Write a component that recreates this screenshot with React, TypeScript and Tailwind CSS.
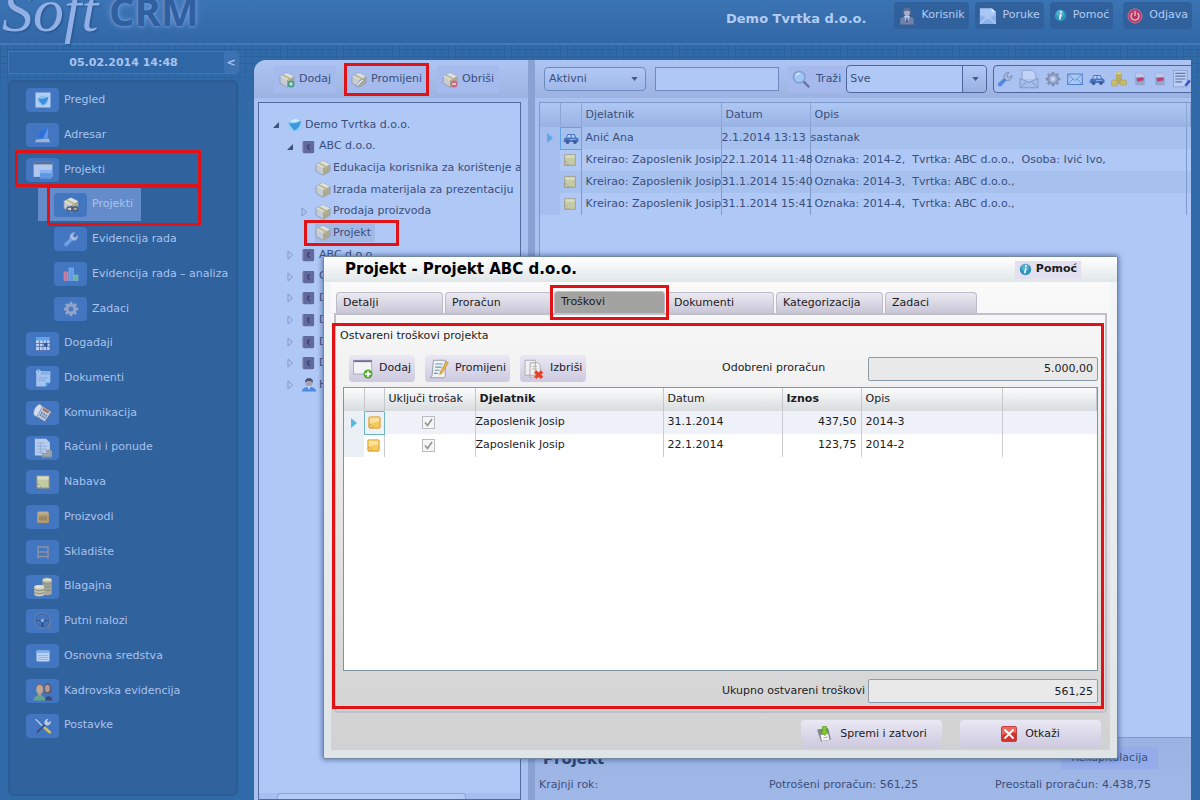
import type { ReactNode } from "react";

/* ---------- icons ---------- */

function Svg({ children, size = 16 }: { children: ReactNode; size?: number }) {
  return (
    <svg width={size} height={size} viewBox="0 0 16 16" aria-hidden="true" className="shrink-0">
      {children}
    </svg>
  );
}

const GEAR =
  "M7 1h2l.4 2 1.2.5L12.300 2.300l1.400 1.400-1.200 1.700.5 1.200 2 .4v2l-2 .4-.5 1.200 1.200 1.700-1.400 1.400-1.700-1.200-1.200.5-.4 2H7l-.4-2-1.200-.5-1.700 1.200-1.400-1.400 1.200-1.700L3 9.400 1 9V7l2-.4.5-1.200-1.200-1.700 1.400-1.400 1.700 1.200L6.600 3z";

function Icon({ name, size = 16 }: { name: string; size?: number }) {
  const art: Record<string, ReactNode> = {
    globe: (
      <>
        <circle cx="8" cy="8" r="6.500" fill="#8fcdf4" />
        <path d="M1.500 5.500c3 1.500 8 1 12.500-1.500-1 5-3 8-6.500 9.500-2-2-4-4.500-6-8z" fill="#3f97dd" />
        <path d="M3 4.500c2-3 7-3.500 9.500-1-3 2-6.500 2.500-9.500 1z" fill="#c9ecfd" />
      </>
    ),
    globePage: (
      <>
        <rect x="0.500" y="0.500" width="15" height="15" fill="#b3cdf3" />
        <circle cx="8" cy="8.500" r="5" fill="#86c3f0" />
        <path d="M2.500 6c3 1.500 7 1 11-1.500-1 5-3 7-5.500 8.500-2-2-4-4-5.500-7z" fill="#3d8fdc" />
      </>
    ),
    adresar: (
      <>
        <path d="M4 5L12.500 1v10H3.500z" fill="#5d95e8" />
        <path d="M4 5L12.500 1 8 10.800l-4.500.2z" fill="#2f6fd8" />
        <path d="M2 12l11-1 1.500 3.500H.8z" fill="#9eb2d8" />
      </>
    ),
    window: (
      <>
        <rect x="0.500" y="1.500" width="15" height="12" fill="#b2c7ee" />
        <rect x="0.500" y="1.500" width="15" height="2" fill="#5b6f98" />
        <rect x="5.500" y="8" width="9.500" height="7" rx="1" fill="#5f97e4" />
        <rect x="5.500" y="8" width="9.500" height="2.500" rx="1" fill="#88b3ef" />
      </>
    ),
    box: <BoxArt />,
    boxLink: (
      <>
        <BoxArt />
        <rect x="4" y="10" width="6" height="4" rx="2" fill="none" stroke="#46577e" strokeWidth="1.300" />
        <rect x="9" y="10" width="6" height="4" rx="2" fill="none" stroke="#46577e" strokeWidth="1.300" />
      </>
    ),
    boxAdd: (
      <>
        <BoxArt />
        <circle cx="12" cy="12" r="3.500" fill="#46998c" />
        <path d="M12 10v4M10 12h4" stroke="#d5efe6" strokeWidth="1.200" />
      </>
    ),
    boxEdit: (
      <>
        <BoxArt />
        <path d="M5 14.500l1-2.500 5-5 1.500 1.500-5 5z" fill="#d9e2f2" stroke="#7f8cab" strokeWidth="0.600" />
      </>
    ),
    boxDel: (
      <>
        <BoxArt />
        <circle cx="12" cy="12" r="3.500" fill="#c56a82" />
        <path d="M10 12h4" stroke="#f0dce8" strokeWidth="1.400" />
      </>
    ),
    wrench: (
      <>
        <path d="M1.500 12.500L7 7l2.500 2.500L4 15c-1.800 1-3.500-.8-2.500-2.500z" fill="#6fa0ea" />
        <path d="M7 7c-.6-3 1.500-5.800 5-5.500L10 4l.5 2 2 .4 2.300-2.200C15.500 8 12.500 10 9.500 9.300z" fill="#a9bfe6" stroke="#7f97c6" strokeWidth="0.600" />
      </>
    ),
    wrenchBlue: (
      <>
        <path d="M1 12.500L7 7l2.500 2.500L4 15.200c-1.800 1-4-.8-3-2.700z" fill="#5288e0" />
        <path d="M7 7c-.6-3 1.500-5.800 5-5.500L10 4l.5 2 2 .4 2.300-2.200C15.500 8 12.500 10 9.500 9.300z" fill="#a9bbdf" stroke="#6f83ae" strokeWidth="0.800" />
      </>
    ),
    chart: (
      <>
        <rect x="1" y="6" width="4" height="8.500" fill="#c0799f" stroke="#d391ad" strokeWidth="0.600" />
        <rect x="6" y="2" width="4.500" height="12.500" fill="#5f9dea" stroke="#86b6f2" strokeWidth="0.600" />
        <rect x="11.500" y="9" width="3.500" height="5.500" fill="#68b0a4" stroke="#8bc7b8" strokeWidth="0.600" />
      </>
    ),
    gear: (
      <>
        <path d={GEAR} fill="#93a4c8" stroke="#93a4c8" strokeWidth="0.400" />
        <circle cx="8" cy="8" r="2.500" fill="#4f78c0" />
      </>
    ),
    gearLight: (
      <>
        <path d={GEAR} fill="#8494b8" stroke="#74849f" strokeWidth="0.400" />
        <circle cx="8" cy="8" r="3.800" fill="#a3b2d4" />
        <circle cx="8" cy="8" r="2" fill="#c5d6f6" />
      </>
    ),
    calendar: (
      <>
        <rect x="1" y="1.500" width="14" height="13" fill="#bccff2" />
        <rect x="1" y="1.500" width="14" height="3" fill="#5da3ea" />
        <path d="M1 7.500h14M1 10.500h14M4.500 4.500v10M8 4.500v10M11.500 4.500v10M1 14.500h14v-13" stroke="#4e6eaa" strokeWidth="0.800" fill="none" />
        <rect x="9" y="7" width="3.500" height="3.500" fill="#33549a" />
      </>
    ),
    docs: (
      <>
        <path d="M2 2h12.500v10l-4 3.500H2z" fill="#a4c3ee" />
        <path d="M2 2h12.500v3H2z" fill="#86b1e9" />
        <circle cx="4" cy="2.500" r="1.700" fill="none" stroke="#cfdff8" strokeWidth="0.800" />
        <path d="M14.500 12h-4v3.500z" fill="#35a1e0" />
        <path d="M4 8h8M4 10h6" stroke="#7d9fd6" strokeWidth="0.800" />
      </>
    ),
    phone: (
      <>
        <path d="M5 .8l10 6.200-5.500 8.200L1 10z" fill="#b8c5de" stroke="#56688f" strokeWidth="0.700" />
        <path d="M5.500.8C2 2 0 6 .6 9.500L3 11 7.500 3z" fill="#d4def0" stroke="#7285ad" strokeWidth="0.600" />
        <path d="M8.500 4l4.500 2.800-1 1.500-4.500-2.800z" fill="#a9705f" />
        <path d="M6.500 7.500l4.500 3M5.500 9.200l4.500 3" stroke="#60739d" strokeWidth="1.200" strokeDasharray="1.300 0.800" />
      </>
    ),
    invoice: (
      <>
        <path d="M1.500.5h9l3 3V14h-12z" fill="#b7cbec" />
        <path d="M3 4h6M3 6.500h8M3 9h8M3 11.500h5M6 4v8" stroke="#8fabd8" strokeWidth="0.700" />
        <path d="M7 12h4v3.500H7zM10.500 9.500H15v6h-4.500z" fill="#8f99a3" />
        <path d="M7 13.500h4M10.500 11.500H15M10.500 13.500H15" stroke="#b5bcc0" strokeWidth="0.600" />
      </>
    ),
    note: (
      <>
        <rect x="2" y="2" width="12" height="12" fill="#c2cba4" stroke="#a5977a" strokeWidth="1" />
        <path d="M2.500 2.500h11v3h-11z" fill="#d6dcc8" />
        <path d="M2.500 9.500l4 4h-4z" fill="#e4e5cf" stroke="#8f8d78" strokeWidth="0.700" />
      </>
    ),
    noteGold: (
      <>
        <rect x="2" y="2" width="12" height="12" rx="1" fill="#f5c95a" stroke="#d99b2e" strokeWidth="1" />
        <path d="M3 3h10v4L3 9z" fill="#fbe19a" />
        <path d="M3 9.500L6.500 13H3z" fill="#fff4cf" stroke="#c98f2c" strokeWidth="0.700" />
      </>
    ),
    crate: (
      <>
        <rect x="2" y="3" width="12" height="11" rx="1.500" fill="#ab9775" />
        <path d="M3.500 2.500h9L14 5.500H2z" fill="#bcae8b" />
        <rect x="3.500" y="7" width="9" height="5" fill="#9c8661" stroke="#c0ae87" strokeWidth="0.500" />
      </>
    ),
    shelf: <path d="M3 2v12.500M13 2v12.500M2.500 3h11M3 8h10M3 12.500h10" stroke="#8d90a0" strokeWidth="1.500" fill="none" />,
    coins: (
      <>
        <path d="M7.500 2.500c0-2.500 7.500-2.500 7.500 0V13c0 2-7.500 2-7.500 0z" fill="#a6a99b" />
        <path d="M1 8c0-2 8-2 8 0v6c0 2-8 2-8 0z" fill="#c4c5b4" />
        <ellipse cx="11.300" cy="2.300" rx="3.600" ry="1.300" fill="#dcdccc" />
        <ellipse cx="5" cy="7.700" rx="3.900" ry="1.300" fill="#e1e1d0" />
        <path d="M1 10c1.500 1.300 6.500 1.300 8 0M1 12.300c1.500 1.300 6.500 1.300 8 0M8 5c1.500 1 5.500 1 7 0M9 7.500c1.500.8 4.500.8 6 0M9 10c1.500.8 4.500.8 6 0" stroke="#7d8277" fill="none" strokeWidth="0.700" />
      </>
    ),
    wheel: (
      <>
        <circle cx="7.500" cy="7.500" r="6" fill="none" stroke="#46659c" strokeWidth="1.500" />
        <circle cx="7.500" cy="7.500" r="6.900" fill="none" stroke="#7f98c8" strokeWidth="0.500" />
        <path d="M2 7h11L8.500 9v4h-2V9z" fill="#31528c" />
        <circle cx="7.500" cy="7.500" r="1.500" fill="#8fb1e8" />
        <path d="M12 13l3-3M13 15l2-1" stroke="#6d7f9f" strokeWidth="1.300" />
      </>
    ),
    list: (
      <>
        <rect x="1.500" y="2.500" width="13" height="11" rx="1" fill="#bcd2f5" />
        <rect x="1.500" y="2.500" width="13" height="2.500" fill="#7db2f0" />
        <path d="M3 7.500h10M3 9.500h10M3 11.500h10" stroke="#8fadde" strokeWidth="0.800" />
      </>
    ),
    people: (
      <>
        <path d="M9 5c0-4.500 5.500-4.500 5.500 0 .8 2.500.3 4-.5 5H9z" fill="#5c5a70" />
        <ellipse cx="11.500" cy="6" rx="2" ry="3" fill="#b0998f" />
        <path d="M9 15.500c0-4 6.500-5 6.500 0z" fill="#3b4a70" />
        <path d="M2.300 6c0-5 6-5 6 0z" fill="#7c6d66" />
        <ellipse cx="5.300" cy="6.800" rx="2.600" ry="3.700" fill="#c2a696" />
        <path d="M4 9h2.600v4H4z" fill="#b79b8c" />
        <path d="M.5 15.500c0-5.500 9.500-5.500 9.500 0z" fill="#63a58d" />
      </>
    ),
    tools: (
      <>
        <path d="M1.500 2L9 9.500" stroke="#b9c8e6" strokeWidth="1.300" />
        <path d="M9.500 9.500l4.500 4" stroke="#c9bd6a" strokeWidth="2.500" strokeLinecap="round" />
        <path d="M2.500 14L10.500 6" stroke="#3b5080" strokeWidth="1.600" />
        <path d="M9.500 6.500C8.500 4 10.500 1 13 1.500L11.500 3.500l1.500 1.300 2-1.500c.5 3-2.500 5-4.500 4z" fill="#b6c9ec" />
      </>
    ),
    company: (
      <>
        <rect x="2" y="1" width="13" height="14" rx="1.500" fill="#62699d" />
        <path d="M2 2.500v11" stroke="#8d93bd" strokeWidth="1.500" />
        <path d="M10 5.500C7 5.700 7 10.500 10 11" stroke="#343c6e" strokeWidth="1.500" fill="none" />
      </>
    ),
    person: (
      <>
        <path d="M.8 14.500c.5-6.500 14-6.500 14.500 0z" fill="#4b8ade" />
        <path d="M6 9h4l-2 4z" fill="#c4dcf8" />
        <circle cx="8" cy="5.500" r="3.700" fill="#aa9fae" />
        <path d="M4 5.500C3.500-.5 12.500-.5 12 5.500 10 3.500 6 3.500 4 5.500z" fill="#4b5578" />
      </>
    ),
    user: (
      <>
        <path d="M2 15.500V11c0-3.500 12-3.500 12 0v4.500z" fill="#7280a4" />
        <circle cx="8" cy="4.200" r="3.500" fill="#5f6d92" />
        <path d="M5.300 4c0 6 5.400 6 5.400 0-2-1-3.400-1-5.400 0z" fill="#a9aec8" />
        <path d="M5.500 8h5L8 15.500z" fill="#c0d2f4" />
        <path d="M7.500 9h1l.5 4-1 2-1-2z" fill="#4b5f90" />
      </>
    ),
    letter: (
      <>
        <path d="M.8 6V1h10.500L15 4.500V15H.8z" fill="#a9c6f5" />
        <path d="M11.300 1v3.500H15z" fill="#dbe8fd" />
        <path d="M.8 6.500L8 11l7-4.500V15H.8z" fill="#8db2e9" />
        <path d="M.8 15L6.500 10M15 15L9.500 10" stroke="#b9d1f7" strokeWidth="0.900" />
      </>
    ),
    info: (
      <>
        <circle cx="8" cy="8" r="7" fill="#2f93bd" />
        <circle cx="7.500" cy="5.500" r="4.500" fill="#62bcd8" fillOpacity="0.700" />
        <path d="M8.300 6.800L7.300 12M8.700 3.300l-.2 1" stroke="#ecf8fd" strokeWidth="2" strokeLinecap="round" />
      </>
    ),
    power: (
      <>
        <circle cx="8" cy="8" r="7" fill="#b23a66" stroke="#cf6f92" strokeWidth="1" />
        <path d="M5.500 5a4 4 0 1 0 5 0M8 3v5" stroke="#f0bdd2" strokeWidth="1.300" fill="none" />
      </>
    ),
    search: (
      <>
        <circle cx="6" cy="6" r="4.800" fill="#a4c6f5" stroke="#7f9ccf" strokeWidth="1.200" />
        <path d="M3.500 4.500a3 3 0 0 1 3-1.500" stroke="#dceafe" strokeWidth="1.200" fill="none" />
        <path d="M9.800 9.800L14.500 14.500" stroke="#66759a" strokeWidth="2" />
      </>
    ),
    mailOpen: (
      <>
        <path d="M2.500 8V1h8l3 3v4" fill="#c0d3f6" stroke="#8b9fc8" strokeWidth="0.700" />
        <path d="M.8 7.500L8 11l7.200-3.500V15H.8z" fill="#a5bfec" stroke="#7f94bf" strokeWidth="0.700" />
        <path d="M.8 15l5.500-5M15.200 15L9.800 10" stroke="#7f94bf" strokeWidth="0.700" />
      </>
    ),
    mail: (
      <>
        <rect x="0.700" y="3" width="14.600" height="10.500" fill="#a9c8f8" stroke="#4f7fc8" strokeWidth="1" />
        <path d="M1 3.500L8 9.500l7-6M1 13l5-5M15 13l-5-5" stroke="#5c89cc" fill="none" strokeWidth="0.800" />
      </>
    ),
    car: (
      <>
        <path d="M1 8.500l2-1 1.500-3.500h7L13.500 7.500l2 1V12H.5z" fill="#4a76c6" />
        <path d="M4 7.500l1-2.500h2.500v2.500zM8.500 5H11l1.200 2.500H8.500z" fill="#b7d0f5" />
        <circle cx="4.500" cy="12" r="2" fill="#405a94" />
        <circle cx="12" cy="12" r="2" fill="#405a94" />
        <path d="M7 9.500h6" stroke="#86a9e5" strokeWidth="1" />
      </>
    ),
    gold: (
      <>
        <path d="M5 2c0-1.800 6-1.800 6 0v11H5z" fill="#b9ac63" />
        <path d="M.5 10c0-1.500 6-1.500 6 0v4c0 1.500-6 1.500-6 0zM9 10c0-1.500 6.500-1.500 6.500 0v3c0 1.500-6.500 1.500-6.500 0z" fill="#c7b96d" stroke="#a39555" strokeWidth="0.500" />
        <ellipse cx="8" cy="2.200" rx="2.900" ry="1" fill="#ddd293" />
      </>
    ),
    pdf: (
      <>
        <path d="M2.500.8h8.500l2.500 2.500V15.200h-11z" fill="#95a5d2" />
        <path d="M3 1.300h7.500l2.500 2.500v2H3z" fill="#bccaf0" />
        <path d="M4 7l7.500-1 1 3.500-7.500 1.500z" fill="#b8446f" />
      </>
    ),
    text: (
      <>
        <rect x="0.500" y="0.500" width="12" height="14.500" fill="#bccff6" stroke="#8a9dc8" strokeWidth="0.700" />
        <path d="M2 3h9M2 5.500h9M2 8h9M2 10.500h6" stroke="#6577a0" strokeWidth="1.100" />
        <path d="M10 13.500l4-5 2 1.500-4 4.500z" fill="#3c55cc" />
      </>
    ),
    winAdd: (
      <>
        <rect x="0.500" y="1" width="14.500" height="11" fill="#f4f4f6" stroke="#9a9aa8" strokeWidth="0.600" />
        <rect x="0.500" y="1" width="14.500" height="1.500" fill="#716f9a" />
        <circle cx="12" cy="12" r="3.600" fill="#4fae2d" />
        <path d="M12 9.800v4.400M9.800 12h4.400" stroke="#fff" strokeWidth="1.500" />
      </>
    ),
    docEdit: (
      <>
        <path d="M3.500 1H13v12.500l-1 1.500H1l1.500-2z" fill="#f0f2f5" stroke="#8f96a0" strokeWidth="0.700" />
        <path d="M5 4h6M5 6.500h5M4.500 9h4M4 11.500h3" stroke="#6b93bb" strokeWidth="0.900" />
        <path d="M8.500 12.500l.8-2.800L13.800 2l1.600 1-4.600 7.800z" fill="#efb84a" stroke="#b27c25" strokeWidth="0.500" />
      </>
    ),
    docDel: (
      <>
        <path d="M.8 1H9v12H.8zM5 3h6l2 2v9.500H4.500z" fill="#f0f0f1" stroke="#a5a5ab" strokeWidth="0.700" />
        <path d="M6.500 6h4M6.500 8h4" stroke="#bbb" strokeWidth="0.800" />
        <path d="M9 10l5.500 5M14.500 10L9 15" stroke="#e0442a" strokeWidth="2.600" />
      </>
    ),
    save: (
      <>
        <path d="M1 3.500l11-1.500 3 11.500-10 2z" fill="#83888d" />
        <path d="M4.500 9l7.500-1.500 1.500 6-7.500 1.500z" fill="#f3f4f4" />
        <path d="M7.500 12l4-1" stroke="#a7adb2" />
        <path d="M6.500.5h4V5h2.500L8.800 9.500 4 5h2.500z" fill="#7fca28" stroke="#4f8f18" strokeWidth="0.600" />
      </>
    ),
    cancel: (
      <>
        <rect x="0.500" y="0.500" width="15" height="15" rx="1.500" fill="#d6322d" stroke="#b52420" strokeWidth="0.700" />
        <path d="M1 1h14v6c-5-1-9 0-14 2z" fill="#ea6a62" />
        <path d="M4 4l8 8M12 4l-8 8" stroke="#fff" strokeWidth="1.800" strokeLinecap="round" />
      </>
    ),
  };
  return <Svg size={size}>{art[name]}</Svg>;
}

function BoxArt() {
  return (
    <>
      <path d="M8 .8l7 3.500v7L8 15.200l-7-4v-7z" fill="#c6ccd2" stroke="#8b95a8" strokeWidth="0.800" />
      <path d="M8 8l7-3.700v7L8 15.200z" fill="#aaa792" />
      <path d="M1 4.300L8 .8l7 3.500L8 8z" fill="#dadfe0" />
      <path d="M4.500 2.600L11.500 6v3l-2 1V7L2.800 3.500z" fill="#bfb687" />
    </>
  );
}

/* Red highlight frame drawn over the element it sits in. */
function Frame({ className }: { className: string }) {
  return <span className={"pointer-events-none absolute z-20 border-[3px] border-[#e01216] " + className} />;
}

/* ---------- sidebar ---------- */

type NavItem = { label: string; icon: string; size?: number; sub?: boolean; active?: boolean; frame?: string };

const NAV: NavItem[] = [
  { label: "Pregled", icon: "globePage" },
  { label: "Adresar", icon: "adresar", size: 18 },
  { label: "Projekti", icon: "window", size: 20, frame: "-top-0.5 left-[5px] right-[35px] h-[37px]" },
  { label: "Projekti", icon: "boxLink", sub: true, active: true, frame: "-top-0.5 left-[37px] right-[35px] h-[41px]" },
  { label: "Evidencija rada", icon: "wrench", sub: true },
  { label: "Evidencija rada – analiza", icon: "chart", sub: true },
  { label: "Zadaci", icon: "gear", sub: true },
  { label: "Događaji", icon: "calendar" },
  { label: "Dokumenti", icon: "docs", size: 18 },
  { label: "Komunikacija", icon: "phone", size: 20 },
  { label: "Računi i ponude", icon: "invoice", size: 20 },
  { label: "Nabava", icon: "note" },
  { label: "Proizvodi", icon: "crate" },
  { label: "Skladište", icon: "shelf" },
  { label: "Blagajna", icon: "coins", size: 20 },
  { label: "Putni nalozi", icon: "wheel", size: 18 },
  { label: "Osnovna sredstva", icon: "list" },
  { label: "Kadrovska evidencija", icon: "people", size: 20 },
  { label: "Postavke", icon: "tools", size: 18 },
];

function Sidebar() {
  return (
    <aside className="mt-1.5 mb-1 ml-2 flex w-[231px] shrink-0 flex-col text-[#a9c3ee]">
      <div className="flex h-[23px] items-stretch rounded-r border border-[#4377b4] bg-[#2f67a6]">
        <div className="flex-1 pl-3.5 text-center font-bold leading-[22px]">05.02.2014 14:48</div>
        <button type="button" className="w-3.5 bg-[#3c72b2] font-bold leading-none">
          &lt;
        </button>
      </div>
      <nav className="mt-1.5 mr-px flex-1 rounded-md border-2 border-[#2d5c94] bg-[#30629d]">
        <ul className="mt-px grid h-[660px] auto-rows-fr">
          {NAV.map((n, i) => (
            <li key={i} className="relative flex items-center">
              {n.frame && <Frame className={n.frame} />}
              <a
                href="#"
                className={
                  "flex h-[33px] items-center " +
                  (n.active ? "ml-7 bg-[#658cca] pr-2 pl-4" : n.sub ? "pl-11" : "pl-4")
                }
              >
                <span className="mr-[5px] flex h-6 w-[33px] items-center justify-center rounded bg-[#4376c1]">
                  <Icon name={n.icon} size={n.size ?? 16} />
                </span>
                {n.label}
              </a>
            </li>
          ))}
        </ul>
      </nav>
    </aside>
  );
}

/* ---------- project tree ---------- */

type TreeRow = { label: string; icon: string; level: 0 | 1 | 2; exp?: "open" | "closed"; selected?: boolean };

const TREE: TreeRow[] = [
  { label: "Demo Tvrtka d.o.o.", icon: "globe", level: 0, exp: "open" },
  { label: "ABC d.o.o.", icon: "company", level: 1, exp: "open" },
  { label: "Edukacija korisnika za korištenje a", icon: "box", level: 2 },
  { label: "Izrada materijala za prezentaciju", icon: "box", level: 2 },
  { label: "Prodaja proizvoda", icon: "box", level: 2, exp: "closed" },
  { label: "Projekt", icon: "box", level: 2, selected: true },
  { label: "ABC d.o.o.", icon: "company", level: 1, exp: "closed" },
  { label: "C", icon: "company", level: 1, exp: "closed" },
  { label: "D", icon: "company", level: 1, exp: "closed" },
  { label: "D", icon: "company", level: 1, exp: "closed" },
  { label: "D", icon: "company", level: 1, exp: "closed" },
  { label: "D", icon: "company", level: 1, exp: "closed" },
  { label: "H", icon: "person", level: 1, exp: "closed" },
];

const INDENT = ["pl-[11px]", "pl-[25px]", "pl-[39px]"];

function LeftPane() {
  const tool = "flex h-[27px] items-center gap-1 bg-[#a5baed] px-[5px]";
  return (
    <section className="flex w-[274px] shrink-0 flex-col">
      <div className="flex h-[38px] items-center gap-2.5 rounded-tl-xl bg-linear-to-b from-[#aec5f3] to-[#9cb3e2] pt-px pl-5">
        <button type="button" className={tool}>
          <Icon name="boxAdd" />
          Dodaj
        </button>
        <button type="button" className={tool + " relative"}>
          <Icon name="boxEdit" />
          Promijeni
          <Frame className="-inset-x-[2px] -inset-y-[3px]" />
        </button>
        <button type="button" className={tool}>
          <Icon name="boxDel" />
          Obriši
        </button>
      </div>
      <div className="mt-1 mr-[7px] ml-1 flex flex-1 flex-col overflow-hidden border border-[#526a9c] bg-[#b0c8f5]">
        <ul className="mt-[11px] grid h-[282px] auto-rows-fr">
          {TREE.map((r, i) => (
            <li key={i} className={"relative flex items-center whitespace-nowrap " + INDENT[r.level]}>
              <svg width="12" height="12" viewBox="0 0 12 12" aria-hidden="true" className="mr-[5px] shrink-0">
                {r.exp === "open" && <path d="M9 3v6H3z" fill="#3e5178" />}
                {r.exp === "closed" && <path d="M4 2l4.500 4L4 10z" fill="none" stroke="#8299c8" />}
              </svg>
              <span className={"flex h-[18px] items-center gap-0.5 " + (r.selected ? "bg-[#a2b9e6] pr-1" : "")}>
                <Icon name={r.icon} size={r.icon === "company" ? 14 : 16} />
                <span className={r.icon === "company" ? "pl-0.5" : ""}>{r.label}</span>
              </span>
              {r.selected && <Frame className="-top-0.5 left-[45px] h-[26px] w-[95px]" />}
            </li>
          ))}
        </ul>
        <div className="mt-auto h-1.5 bg-[#a6bfee] px-[18px]">
          <div className="mr-9 h-1.5 rounded-t border border-b-0 border-[#8ba5d8] bg-[#b4cbf7]" />
        </div>
      </div>
    </section>
  );
}

/* ---------- activity pane ---------- */

const ACTIVITY = [
  { icon: "car", who: "Anić Ana", date: "2.1.2014 13:13", text: "sastanak", flush: true },
  { icon: "note", who: "Kreirao: Zaposlenik Josip", date: "22.1.2014 11:48", text: "Oznaka: 2014-2,  Tvrtka: ABC d.o.o.,  Osoba: Ivić Ivo," },
  { icon: "note", who: "Kreirao: Zaposlenik Josip", date: "31.1.2014 15:40", text: "Oznaka: 2014-3,  Tvrtka: ABC d.o.o.," },
  { icon: "note", who: "Kreirao: Zaposlenik Josip", date: "31.1.2014 15:41", text: "Oznaka: 2014-4,  Tvrtka: ABC d.o.o.," },
];

const TOOLBAR = [
  { icon: "wrenchBlue", label: "Rad" },
  { icon: "mailOpen", label: "Pismo" },
  { icon: "gearLight", label: "Zadatak" },
  { icon: "mail", label: "E-mail" },
  { icon: "car", label: "Putovanje" },
  { icon: "gold", label: "Trošak" },
  { icon: "pdf", label: "PDF" },
  { icon: "pdf", label: "PDF izvoz" },
  { icon: "text", label: "Bilješka" },
];

const TOOLBAR_SIZE: Record<string, number> = { mailOpen: 20, pdf: 14, text: 18 };

function Caret({ className }: { className: string }) {
  return (
    <svg width="7" height="4" viewBox="0 0 8 5" aria-hidden="true" className={"pointer-events-none absolute " + className}>
      <path d="M0 0h8L4 5z" fill="#465a88" />
    </svg>
  );
}

function RightPane() {
  return (
    <section className="flex min-w-0 flex-1 flex-col overflow-hidden">
      <div className="flex h-[38px] shrink-0 items-center overflow-hidden bg-linear-to-b from-[#aec5f3] to-[#9cb3e2] pl-[9px]">
        <div className="relative w-[102px] shrink-0">
          <select
            aria-label="Status"
            className="block h-6 w-full appearance-none rounded border border-[#6d8ac0] bg-linear-to-b from-[#b2c9f6] to-[#9fb8e7] pl-1"
          >
            <option>Aktivni</option>
          </select>
          <Caret className="top-2.5 right-2" />
        </div>
        <input aria-label="Traženi pojam" className="ml-[9px] h-6 w-[124px] shrink-0 border border-[#6d8ac0] bg-[#b0c8f5] px-1" />
        <button type="button" className="ml-[9px] flex h-[27px] shrink-0 items-center gap-[5px] bg-[#a5b9ed] px-1">
          <Icon name="search" size={19} />
          Traži
        </button>
        <div className="relative ml-px w-[141px] shrink-0">
          <select
            aria-label="Vrsta"
            className="block h-7 w-full appearance-none rounded border border-[#4d659a] bg-[#b0c8f5] pl-[3px]"
          >
            <option>Sve</option>
          </select>
          <span className="pointer-events-none absolute inset-y-px right-px w-6 rounded-r border-l border-[#4d659a] bg-linear-to-b from-[#b0c8f5] to-[#98b1e1]" />
          <Caret className="top-3 right-2" />
        </div>
        <div className="ml-1.5 flex h-7 w-[220px] shrink-0 items-center gap-1.5 rounded border border-[#4d659a] bg-[#aac2f1] pl-[3px]">
          {TOOLBAR.map((t) => (
            <button key={t.label} type="button" aria-label={t.label} className="shrink-0">
              <Icon name={t.icon} size={TOOLBAR_SIZE[t.icon] ?? 16} />
            </button>
          ))}
        </div>
      </div>

      <div className="mt-1 ml-1 flex-1 overflow-hidden border-t border-l border-[#7d98cc] bg-[#b0c8f5]">
        <table className="w-full table-fixed border-collapse text-left whitespace-pre">
          <colgroup>
            <col className="w-5" />
            <col className="w-[21px]" />
            <col className="w-[140px]" />
            <col className="w-[89px]" />
            <col />
            <col className="w-1" />
          </colgroup>
          <thead>
            <tr className="h-6 bg-linear-to-b from-[#afc7f4] to-[#98b3e3] [&>th]:border-r [&>th]:border-[#8ba5d6] [&>th]:font-normal">
              <th />
              <th />
              <th className="pl-1">Djelatnik</th>
              <th className="pl-1">Datum</th>
              <th className="pl-1">Opis</th>
              <th />
            </tr>
          </thead>
          <tbody>
            {ACTIVITY.map((a, i) => (
              <tr key={i} className="h-[22px] odd:bg-[#a7c1ef] [&>td]:p-0">
                <td className="bg-[#a5beed]">
                  {i === 0 && (
                    <svg width="6" height="10" viewBox="0 0 6 10" className="mx-auto block" aria-hidden="true">
                      <path d="M0 0l6 5-6 5z" fill="#5fa6ea" />
                    </svg>
                  )}
                </td>
                <td className={i === 0 ? "border border-[#62a4e8]" : "border-r border-[#7f9bcd]"}>
                  <span className="flex justify-center">
                    <Icon name={a.icon} size={a.flush ? 16 : 14} />
                  </span>
                </td>
                <td className="border-r border-[#7f9bcd]">
                  <span className="pl-1">{a.who}</span>
                </td>
                <td className="border-r border-[#7f9bcd]">{a.date}</td>
                <td className="border-r border-[#7f9bcd]">
                  <span className={a.flush ? "" : "pl-1"}>{a.text}</span>
                </td>
                <td />
              </tr>
            ))}
          </tbody>
        </table>
      </div>

      <div className="flex h-[63px] shrink-0 flex-col border-t border-[#7d98cc] bg-linear-to-b from-[#9ab3e3] to-[#a0b8e7] pl-1">
        <div className="mt-[9px] flex h-[22px] items-center justify-between pr-[33px] pl-1">
          <h2 className="pt-0.5 text-[15px] font-bold text-[#2c4275]">Projekt</h2>
          <button type="button" className="h-[22px] bg-[#94adea] px-2.5">
            Rekapitulacija
          </button>
        </div>
        <div className="mt-2 flex pr-10">
          <span className="w-[230px]">Krajnji rok:</span>
          <span>Potrošeni proračun: 561,25</span>
          <span className="ml-auto">Preostali proračun: 4.438,75</span>
        </div>
      </div>
    </section>
  );
}

/* ---------- dialog ---------- */

const TABS = [
  { label: "Detalji", width: "w-[107px]" },
  { label: "Proračun", width: "w-[107px]" },
  { label: "Troškovi", width: "w-[111px]", active: true },
  { label: "Dokumenti", width: "w-[107px]" },
  { label: "Kategorizacija", width: "w-[107px]" },
  { label: "Zadaci", width: "w-[92px]" },
];

const COSTS = [
  { who: "Zaposlenik Josip", date: "31.1.2014", amount: "437,50", text: "2014-3" },
  { who: "Zaposlenik Josip", date: "22.1.2014", amount: "123,75", text: "2014-2" },
];

function Dialog() {
  const btn = "flex items-center rounded-sm bg-linear-to-b from-[#eae8f3] to-[#cdc9e0]";
  const tool = btn + " h-[27px] gap-1.5 px-1";
  const field = "h-6 w-[230px] rounded-xs border border-[#8b9cab] bg-[#e9e9e9] px-1 text-right";
  return (
    <div
      role="dialog"
      aria-label="Projekt - Projekt ABC d.o.o."
      className="absolute top-64 right-[82px] bottom-[41px] left-[323px] flex flex-col rounded-xs border border-[#71889f] bg-linear-to-b from-[#f4f6f7] to-[#dfe4e7] px-[7px] pb-2 text-[#1c1c1e] shadow-[0_0_5px_1px_rgba(40,70,130,0.6)]"
    >
      <header className="-mx-[7px] flex h-[25px] shrink-0 items-center justify-between bg-linear-to-b from-white to-[#e0e6e8] pr-9 pl-[21px]">
        <h1 className="text-[15px] font-bold text-black">Projekt - Projekt ABC d.o.o.</h1>
        <button type="button" className="flex h-[18px] items-center gap-1 bg-[#e2e0ef] px-1 font-bold">
          <Icon name="info" size={13} />
          Pomoć
        </button>
      </header>

      <div className="flex min-h-0 flex-1 flex-col bg-linear-to-b from-[#fafafa] to-[#d1d1d2] px-[3px] pt-[9px]">
        <div role="tablist" className="flex items-end gap-0.5 pl-0.5">
          {TABS.map((t) => (
            <button
              key={t.label}
              type="button"
              role="tab"
              aria-selected={!!t.active}
              className={
                "relative rounded-t border border-b-0 border-[#bdbcc8] pl-1.5 text-left " +
                t.width +
                (t.active ? " h-[22px] bg-[#a3a3a2]" : " h-[21px] bg-linear-to-b from-[#ebe9f1] to-[#c9c7d6]")
              }
            >
              {t.label}
              {t.active && <Frame className="-inset-x-[5px] -inset-y-[7px]" />}
            </button>
          ))}
        </div>

        <div className="relative flex min-h-0 flex-1 flex-col rounded-b border-2 border-[#bfc0c8] px-[7px]">
          <Frame className="top-2 right-px bottom-0.5 -left-1" />
          <p className="mt-[14px] -ml-[3px] leading-[14px]">Ostvareni troškovi projekta</p>
          <div className="mt-3 flex items-center gap-2.5 pl-1.5">
            <button type="button" className={tool}>
              <Icon name="winAdd" size={20} />
              Dodaj
            </button>
            <button type="button" className={tool}>
              <Icon name="docEdit" size={20} />
              Promijeni
            </button>
            <button type="button" className={tool}>
              <Icon name="docDel" size={20} />
              Izbriši
            </button>
            <label htmlFor="budget" className="ml-auto w-[136px]">
              Odobreni proračun
            </label>
            <input id="budget" readOnly defaultValue="5.000,00" className={field} />
          </div>

          <div className="mt-[5px] min-h-0 flex-1 border border-[#7f95a3] bg-white">
            <table className="w-full table-fixed border-collapse text-left">
              <colgroup>
                <col className="w-5" />
                <col className="w-5" />
                <col className="w-[91px]" />
                <col className="w-[188px]" />
                <col className="w-[119px]" />
                <col className="w-[79px]" />
                <col className="w-[141px]" />
                <col />
              </colgroup>
              <thead>
                <tr className="h-[23px] bg-linear-to-b from-[#fbfcfc] to-[#d8dcde] [&>th]:border-r [&>th]:border-[#c3c8cc] [&>th]:p-0 [&>th]:pl-1">
                  <th />
                  <th />
                  <th className="font-normal whitespace-nowrap">Uključi trošak</th>
                  <th className="font-bold">Djelatnik</th>
                  <th className="font-normal">Datum</th>
                  <th className="font-bold">Iznos</th>
                  <th className="font-normal">Opis</th>
                  <th />
                </tr>
              </thead>
              <tbody>
                {COSTS.map((c, i) => (
                  <tr key={i} className="h-[23px] odd:bg-[#eef2f8] [&>td]:p-0">
                    <td className="bg-[#ebf0f6]">
                      {i === 0 && (
                        <svg width="6" height="10" viewBox="0 0 6 10" className="mx-auto block" aria-hidden="true">
                          <path d="M0 0l6 5-6 5z" fill="#5bb8e0" />
                        </svg>
                      )}
                    </td>
                    <td className={i === 0 ? "border border-[#6fb4c4]" : "border-r border-[#c9cdd1]"}>
                      <span className="flex justify-center">
                        <Icon name="noteGold" size={15} />
                      </span>
                    </td>
                    <td className="border-r border-[#c9cdd1]">
                      <span className="relative ml-[37px] block size-[13px]">
                        <input
                          type="checkbox"
                          defaultChecked
                          aria-label="Uključi trošak"
                          className="block size-[13px] appearance-none border border-[#b9bcc0] bg-[#f5f5f5]"
                        />
                        <svg viewBox="0 0 13 13" className="pointer-events-none absolute inset-0" aria-hidden="true">
                          <path d="M3 6.500l2.500 3L10 3" fill="none" stroke="#8f9194" strokeWidth="1.600" />
                        </svg>
                      </span>
                    </td>
                    <td className="border-r border-[#c9cdd1]">{c.who}</td>
                    <td className="border-r border-[#c9cdd1]">
                      <span className="pl-1">{c.date}</span>
                    </td>
                    <td className="border-r border-[#c9cdd1] text-right">
                      <span className="pr-1">{c.amount}</span>
                    </td>
                    <td className="border-r border-[#c9cdd1]">
                      <span className="pl-1">{c.text}</span>
                    </td>
                    <td />
                  </tr>
                ))}
              </tbody>
            </table>
          </div>

          <div className="mt-2 mb-2 flex items-center gap-2.5">
            <label htmlFor="total" className="ml-auto w-[136px] whitespace-nowrap">
              Ukupno ostvareni troškovi
            </label>
            <input id="total" readOnly defaultValue="561,25" className={field} />
          </div>
        </div>

        <div className="flex justify-end gap-[18px] pt-[7px] pr-1.5 pb-0.5">
          <button type="button" className={btn + " h-7 w-[141px] justify-center gap-2"}>
            <Icon name="save" />
            Spremi i zatvori
          </button>
          <button type="button" className={btn + " h-7 w-[141px] justify-center gap-2"}>
            <Icon name="cancel" />
            Otkaži
          </button>
        </div>
      </div>
    </div>
  );
}

/* ---------- page ---------- */

export default function App() {
  const top = "flex h-[27px] items-center gap-1.5 rounded bg-[#31619d] px-1";
  return (
    <div className="relative flex h-screen flex-col overflow-hidden bg-[#306aa8] font-['DejaVu_Sans',sans-serif] text-[11px]">
      <div className="pointer-events-none absolute inset-x-0 top-[42px] h-20 bg-[linear-gradient(to_right,#2b6099_1px,transparent_1px),linear-gradient(to_bottom,#2b6099_1px,transparent_1px)] bg-[length:7px_7px] [mask-image:linear-gradient(to_bottom,black,transparent)]" />

      <header className="relative flex h-[45px] shrink-0 justify-end border-b-2 border-[#4379b6] bg-linear-to-b from-[#3b74b4] to-[#3167a5] pr-2 text-[#b4ccf2]">
        <div className="mr-auto flex whitespace-nowrap">
          <span className="-mt-[21px] h-0 w-[109px] pl-0.5 font-['Liberation_Serif',serif] text-[62px] leading-[62px] text-[#93b0e6] italic [text-shadow:1px_1px_2px_#24508a]">
            Soft
          </span>
          <span className="-mt-[13px] h-0 font-['Open_Sans',sans-serif] text-[40px] leading-[48px] font-bold text-[#2f5f9f] [text-shadow:0_0_3px_#7fa3de,0_0_7px_#6c95d6]">
            CRM
          </span>
        </div>
        <div className="mt-2.5 mr-[27px] text-[13px] leading-[18px] font-bold">Demo Tvrtka d.o.o.</div>
        <div className="mt-0.5 flex items-start gap-1.5">
          <button type="button" className={top}>
            <Icon name="user" size={18} />
            Korisnik
          </button>
          <button type="button" className={top}>
            <Icon name="letter" size={18} />
            Poruke
          </button>
          <button type="button" className={top}>
            <Icon name="info" size={13} />
            Pomoć
          </button>
          <button type="button" className={top + " ml-1"}>
            <Icon name="power" />
            Odjava
          </button>
        </div>
      </header>

      <div className="relative flex min-h-0 flex-1">
        <Sidebar />
        <main className="mt-[15px] mr-[9px] ml-[15px] flex min-w-0 flex-1 overflow-hidden rounded-tl-xl bg-[#a9c1ef] text-[#3a4f7c]">
          <LeftPane />
          <div className="w-[7px] shrink-0 bg-[#8aa2d2]" />
          <RightPane />
        </main>
      </div>

      <Dialog />
    </div>
  );
}
